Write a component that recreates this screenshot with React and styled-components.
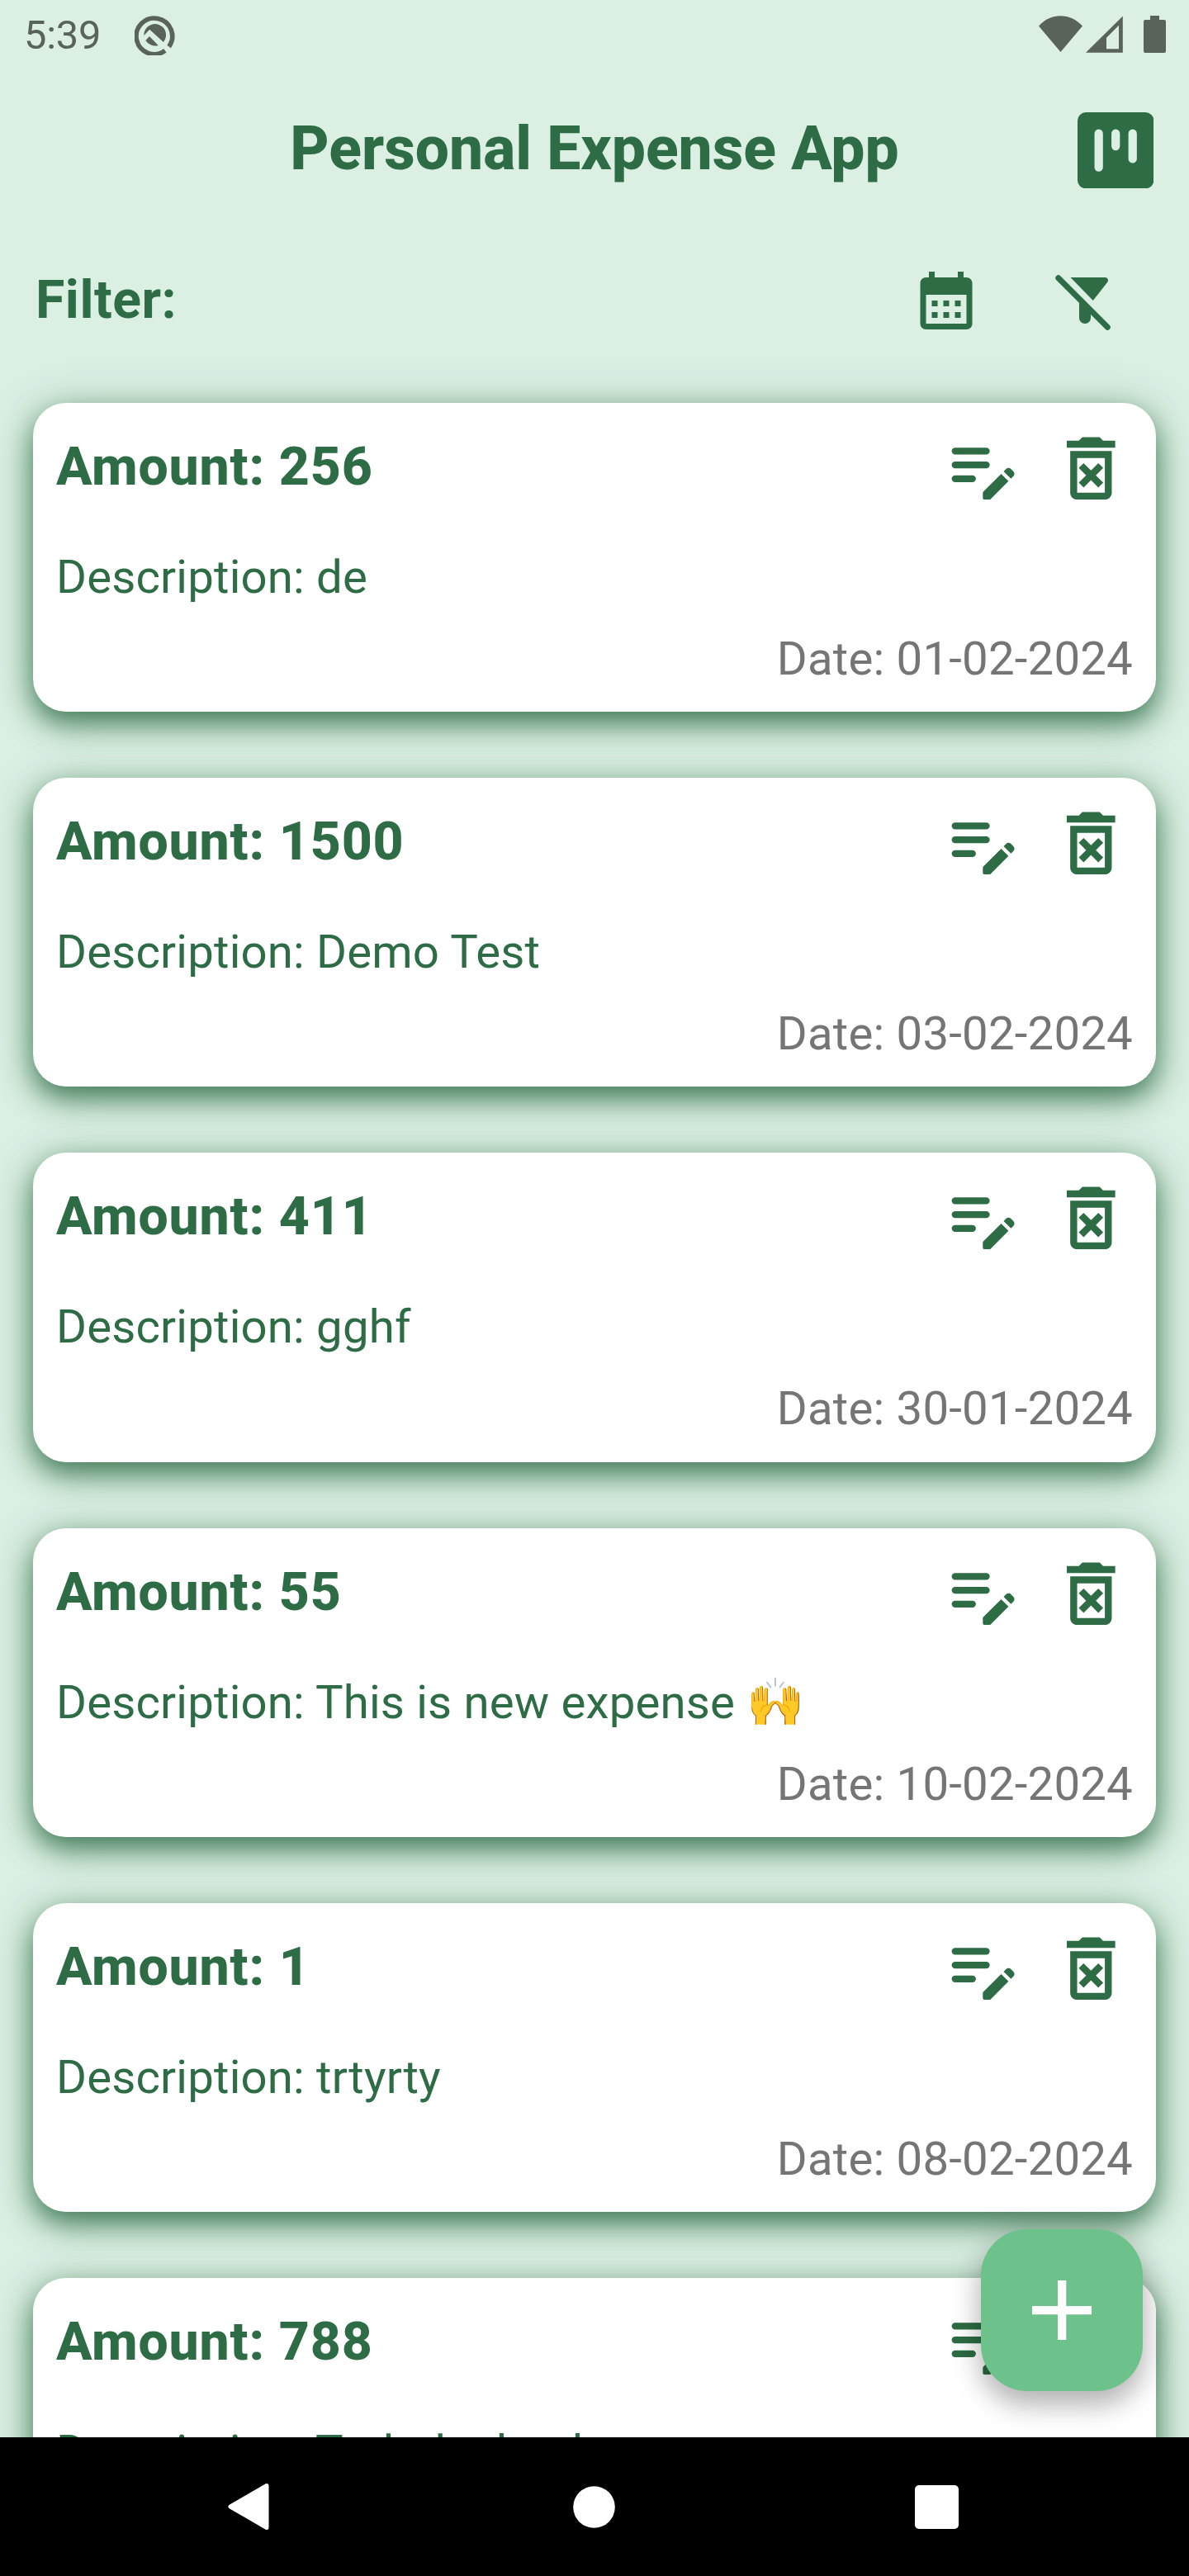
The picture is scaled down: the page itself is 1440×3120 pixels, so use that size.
import React from "react";
import styled, { createGlobalStyle } from "styled-components";
import { MdCalendarMonth, MdOutlineDeleteForever } from "react-icons/md";

const GREEN = "#2d6c44";
const MINT = "#dbefe3";
const STATUS = "#59635a";

const Global = createGlobalStyle`
  * { box-sizing: border-box; }
  body { margin: 0; background: ${MINT}; font-family: Roboto, "Noto Color Emoji", sans-serif; }
`;

const Screen = styled.div`
  position: relative;
  display: flex;
  flex-direction: column;
  width: 1440px;
  height: 3120px;
  overflow: hidden;
  background: ${MINT};
  color: ${GREEN};
`;

const StatusBar = styled.div`
  display: flex;
  align-items: center;
  justify-content: space-between;
  height: 84px;
  padding: 0 28px 0 29px;
  color: ${STATUS};
`;

const StatusGroup = styled.div`
  display: flex;
  align-items: center;
  gap: 40px;
`;

const Clock = styled.span`
  width: 94px;
  padding-top: 2px;
  font-size: 48.8px;
  line-height: 56px;
  letter-spacing: -0.2px;
`;

const TitleBar = styled.header`
  display: grid;
  grid-template-columns: 1fr auto 1fr;
  align-items: center;
  height: 196px;
  padding: 0 43px;
`;

const Title = styled.h1`
  grid-column: 2;
  margin: 0;
  padding-bottom: 4px;
  font-size: 73.2px;
  line-height: 86px;
  font-weight: 800;
  white-space: nowrap;
`;

const BoardButton = styled.button`
  grid-column: 3;
  justify-self: end;
  display: flex;
  padding: 0;
  border: 0;
  background: none;
  color: ${GREEN};
`;

const FilterBar = styled.div`
  display: flex;
  align-items: center;
  height: 168px;
  padding: 0 84px 0 43px;
`;

const FilterLabel = styled.span`
  flex: 1;
  padding-bottom: 2px;
  font-size: 64.4px;
  line-height: 76px;
  font-weight: 700;
  letter-spacing: 0.5px;
`;

const IconButton = styled.button`
  display: flex;
  padding: 0;
  margin-left: ${(p) => p.$gap || 0}px;
  border: 0;
  background: none;
  color: ${GREEN};
`;

const List = styled.main`
  flex: 1;
  min-height: 0;
  display: flex;
  flex-direction: column;
  gap: 80px;
  padding: 40px 40px 0;
`;

const Card = styled.article`
  flex: none;
  display: flex;
  flex-direction: column;
  height: 374.2px;
  padding: 29px 28px 0;
  border-radius: 40px;
  background: #fff;
  box-shadow: 0 14px 34px rgba(45, 108, 68, 0.87), 0 4px 56px rgba(45, 108, 68, 0.22);
`;

const CardHead = styled.div`
  display: flex;
  align-items: flex-start;
  height: 134px;
`;

const Amount = styled.h2`
  flex: 1;
  margin: 10px 0 0;
  font-size: 64.4px;
  line-height: 76px;
  font-weight: 800;
  letter-spacing: 0.8px;
`;

const Description = styled.p`
  margin: 15px 0 0;
  font-size: 56.35px;
  line-height: 66px;
  letter-spacing: 0.17px;
  white-space: nowrap;
`;

const DateText = styled.time`
  align-self: flex-end;
  margin-top: 33px;
  font-size: 56.35px;
  line-height: 66px;
  letter-spacing: 0.2px;
  color: #757575;
`;

const AddButton = styled.button`
  position: absolute;
  right: 56px;
  bottom: 224px;
  display: flex;
  align-items: center;
  justify-content: center;
  width: 196px;
  height: 196px;
  padding: 0;
  border: 0;
  border-radius: 56px;
  background: #6dc18b;
  box-shadow: 0 18px 32px rgba(0, 0, 0, 0.25), 0 2px 44px rgba(0, 0, 0, 0.1);
`;

const NavBar = styled.nav`
  position: relative;
  display: flex;
  align-items: center;
  justify-content: space-between;
  height: 168px;
  padding: 0 278.6px 0 275.5px;
  background: #000;
`;

const expenses = [
  { amount: "256", text: "de", date: "01-02-2024" },
  { amount: "1500", text: "Demo Test", date: "03-02-2024" },
  { amount: "411", text: "gghf", date: "30-01-2024" },
  { amount: "55", text: "This is new expense 🙌", date: "10-02-2024" },
  { amount: "1", text: "trtyrty", date: "08-02-2024" },
  { amount: "788", text: "Todadeaheah", date: "09-02-2024" },
];

function DebugIcon() {
  return (
    <svg width="50" height="50" viewBox="0 0 50 50">
      <path d="M36.9 44.3A21.8 21.8 0 1 1 41.6 39.5" fill="none" stroke={STATUS} strokeWidth="5.6" />
      <path d="M11.3 26A13.4 13.4 0 1 1 35 33.9L18.2 18.8Z" fill={STATUS} />
      <path d="M18 27.1L28.7 37.9A13.4 13.4 0 0 1 13.3 32Z" fill={STATUS} />
    </svg>
  );
}

function StatusIcons() {
  return (
    <svg width="154" height="48" viewBox="0 0 154 48" fill={STATUS}>
      <path d="M0 13.5C15 -3 38 -3 53 13.5L26.5 45Z" />
      <path fillRule="evenodd" d="M57 45.7L101.8 1.5V45.7ZM82 27.8V41.3H97V12.8Z" />
      <path d="M135 1h11v5h6a2 2 0 0 1 2 2v36a2 2 0 0 1-2 2h-23a2 2 0 0 1-2-2V8a2 2 0 0 1 2-2h6z" />
    </svg>
  );
}

function BoardIcon() {
  return (
    <svg width="92.4" height="92.4" viewBox="0 0 18 18">
      <rect width="18" height="18" rx="2" fill={GREEN} />
      <rect x="4" y="4" width="2" height="10" rx="1" fill={MINT} />
      <rect x="8" y="4" width="2" height="5" rx="1" fill={MINT} />
      <rect x="12" y="4" width="2" height="8" rx="1" fill={MINT} />
    </svg>
  );
}

function FilterOffIcon() {
  return (
    <svg width="84" height="84" viewBox="0 0 24 24" fill="currentColor">
      <path d="M19.79 5.61C20.3 4.95 19.83 4 19 4H7l7.8 7.97z" />
      <path d="M10 12v6a2 2 0 0 0 4 0v-2.5z" />
      <path d="M2.8 4.2L19.8 21.2" stroke="currentColor" strokeWidth="2" strokeLinecap="round" />
    </svg>
  );
}

function EditNoteIcon() {
  return (
    <svg width="100.6" height="100.6" viewBox="0 0 24 24" fill="currentColor">
      <path d="M4 7H13M4 11H13M4 15H9" stroke="currentColor" strokeWidth="2" strokeLinecap="round" />
      <path d="M18.01 12.87l.71-.71a.996.996 0 0 1 1.41 0l.71.71c.39.39.39 1.02 0 1.41l-.71.71-2.12-2.12z" />
      <path d="M17.3 13.58l-5.16 5.16c-.09.09-.14.21-.14.35v1.41c0 .28.22.5.5.5h1.41c.13 0 .26-.05.35-.15l5.16-5.16-2.12-2.11z" />
    </svg>
  );
}

function Expense({ amount, text, date }) {
  return (
    <Card>
      <CardHead>
        <Amount>Amount: {amount}</Amount>
        <IconButton aria-label="Edit"><EditNoteIcon /></IconButton>
        <IconButton aria-label="Delete" $gap={31}><MdOutlineDeleteForever size={100.6} /></IconButton>
      </CardHead>
      <Description>Description: {text}</Description>
      <DateText>Date: {date}</DateText>
    </Card>
  );
}

export default function App() {
  return (
    <Screen>
      <Global />
      <StatusBar>
        <StatusGroup>
          <Clock>5:39</Clock>
          <DebugIcon />
        </StatusGroup>
        <StatusIcons />
      </StatusBar>
      <TitleBar>
        <Title>Personal Expense App</Title>
        <BoardButton aria-label="Board"><BoardIcon /></BoardButton>
      </TitleBar>
      <FilterBar>
        <FilterLabel>Filter:</FilterLabel>
        <IconButton aria-label="Calendar"><MdCalendarMonth size={84} /></IconButton>
        <IconButton aria-label="Clear filter" $gap={84}><FilterOffIcon /></IconButton>
      </FilterBar>
      <List>
        {expenses.map((e) => <Expense key={e.amount} {...e} />)}
      </List>
      <NavBar>
        <svg width="56" height="58" viewBox="0 0 56 58">
          <path d="M3 29L47 3.5V54.5Z" fill="#fff" stroke="#fff" strokeWidth="5" strokeLinejoin="round" />
        </svg>
        <svg width="51" height="51" viewBox="0 0 51 51"><circle cx="25.5" cy="25.5" r="25.3" fill="#fff" /></svg>
        <svg width="53" height="53" viewBox="0 0 53 53"><rect width="53" height="53" rx="5" fill="#fff" /></svg>
      </NavBar>
      <AddButton aria-label="Add">
        <svg width="72" height="72" viewBox="0 0 72 72" fill="#fff">
          <path d="M31 0h10.3v31H72v10.3H41.3V72H31V41.3H0V31h31z" />
        </svg>
      </AddButton>
    </Screen>
  );
}
